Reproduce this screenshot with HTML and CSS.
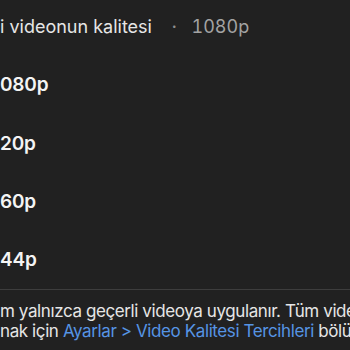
FILE: index.html
```html
<!DOCTYPE html>
<html lang="tr">
<head>
<meta charset="utf-8">
<title>Video kalitesi</title>
<link rel="stylesheet" href="styles.css">
</head>
<body>
<div class="sheet">
  <header class="title">
    <span class="name">i videonun kalitesi</span>
    <span class="dot">•</span>
    <span class="current">1080p</span>
  </header>
  <ul class="options">
    <li class="option">080p</li>
    <li class="option">20p</li>
    <li class="option">60p</li>
    <li class="option">44p</li>
  </ul>
  <div class="divider"></div>
  <p class="note">
    <span class="line">m yalnızca geçerli videoya uygulanır. Tüm vide</span>
    <span class="line">nak için <a class="link" href="#">Ayarlar &gt; Video Kalitesi Tercihleri</a> bölü</span>
  </p>
</div>
</body>
</html>
```

FILE: styles.css
```css
* { box-sizing: border-box; }
html, body {
  margin: 0;
  padding: 0;
  background: #212121;
  overflow: hidden;
}
body {
  width: 350px;
  height: 350px;
  font-family: "Inter", "Noto Sans", sans-serif;
  color: #e8e8e8;
}
.sheet {
  display: flex;
  flex-direction: column;
}
.title {
  display: flex;
  align-items: baseline;
  white-space: nowrap;
  padding-top: 16px;
  height: 55.6px;
  font-size: 18px;
  line-height: 22px;
  color: #e6e6e6;
}
.dot {
  font-size: 8px;
  color: #8e8e8e;
  margin: 0 15px 0 20px;
  position: relative;
  top: -4px;
}
.current {
  color: #a3a3a3;
  font-variant-numeric: tabular-nums;
}
.options {
  list-style: none;
  margin: 0;
  padding: 0;
}
.option {
  height: 58.4px;
  display: flex;
  align-items: center;
  font-size: 19px;
  font-weight: 600;
  letter-spacing: -0.2px;
  color: #f4f4f4;
  white-space: nowrap;
}
.divider {
  height: 1px;
  background: #3d3d3d;
}
.note {
  margin: 0;
  padding-top: 10.5px;
  font-size: 17px;
  line-height: 20px;
  letter-spacing: -0.4px;
  color: #e6e6e6;
  white-space: nowrap;
}
.line { display: block; }
.link {
  color: #5694e4;
  text-decoration: none;
}
```
